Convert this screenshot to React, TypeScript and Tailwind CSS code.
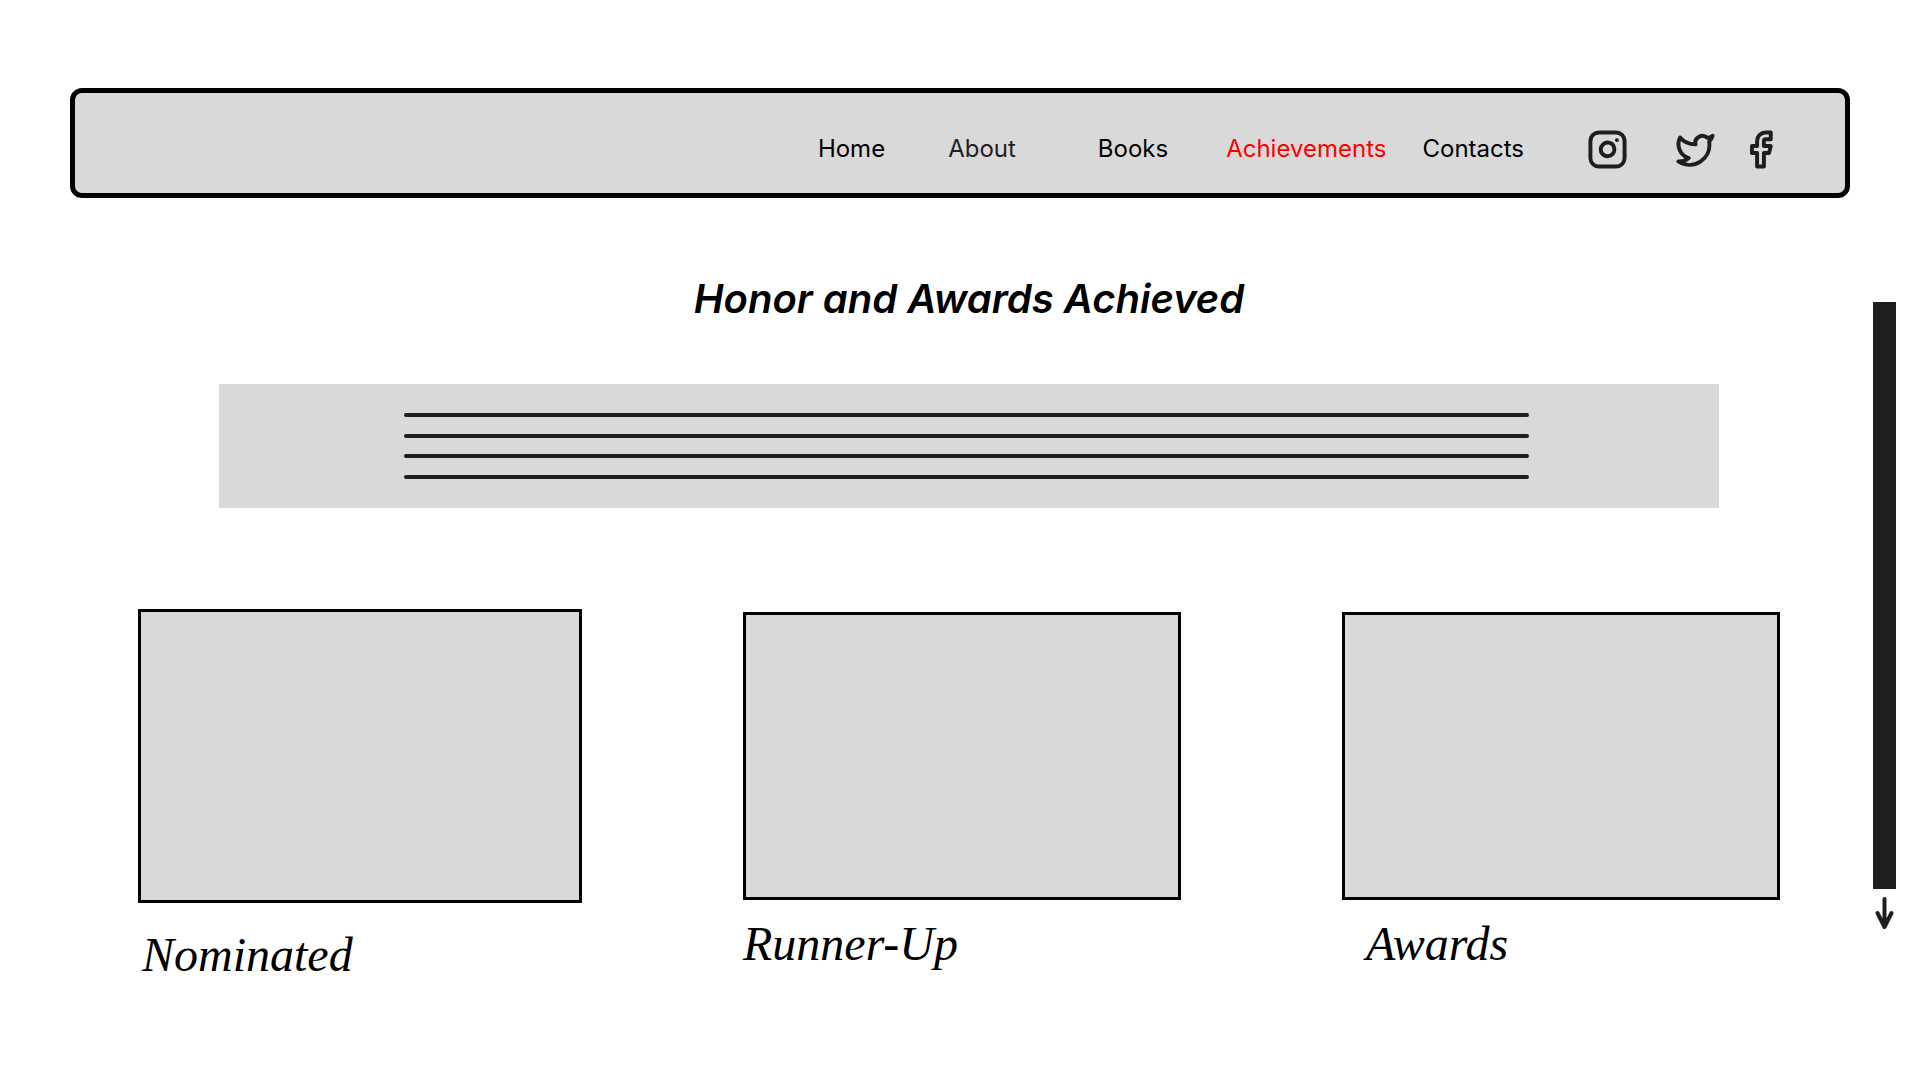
import { Facebook, Instagram, Twitter } from "lucide-react";

const links = [
  { label: "Home", style: "text-black" },
  { label: "About", style: "ml-[63px] text-[#1e1e1e]" },
  { label: "Books", style: "ml-[82px] text-black" },
  { label: "Achievements", style: "ml-[58px] text-[#ff0000]" },
  { label: "Contacts", style: "ml-9 text-black" },
];

const socials = [
  { label: "Instagram", Icon: Instagram, style: "ml-[63px]" },
  { label: "Twitter", Icon: Twitter, style: "ml-[47px]" },
  { label: "Facebook", Icon: Facebook, style: "ml-6" },
];

const cards = [
  { title: "Nominated", style: "flex-[444]", box: "aspect-[444/294]", caption: "mt-5 ml-1" },
  { title: "Runner-Up", style: "flex-[438] pt-[3px]", box: "aspect-[438/288]", caption: "mt-3" },
  { title: "Awards", style: "flex-[438] pt-[3px]", box: "aspect-[438/288]", caption: "mt-3 ml-6" },
];

export default function App() {
  return (
    <div className="min-h-screen bg-white pt-22 font-['Inter',sans-serif] text-black">
      <header className="mx-[70px] flex h-[110px] items-center justify-end rounded-xl border-[5px] border-black bg-[#d9d9d9] pt-3 pr-16">
        <nav aria-label="Main" className="flex items-center text-2xl">
          {links.map(({ label, style }) => (
            <a key={label} href="#" className={style}>
              {label}
            </a>
          ))}
        </nav>
        <div className="flex items-center text-[#1e1e1e]">
          {socials.map(({ label, Icon, style }) => (
            <a key={label} href="#" aria-label={label} className={style}>
              <Icon size={41} strokeWidth={2.3} />
            </a>
          ))}
        </div>
      </header>

      <div className="flex items-start">
        <main className="min-w-0 flex-1">
          <section className="pt-[77px] pr-[154px] pl-[219px]">
            <h1 className="text-center text-[40px] leading-12 font-semibold italic">Honor and Awards Achieved</h1>
            <div className="mt-[61px] flex h-[124px] items-center justify-center bg-[#d9d9d9] pr-1.5">
              <div className="flex h-[66px] w-[1125px] flex-col justify-between">
                {[0, 1, 2, 3].map((line) => (
                  <div key={line} className="h-1 rounded-full bg-[#1e1e1e]" />
                ))}
              </div>
            </div>
          </section>

          <section className="mt-[101px] flex items-start gap-[161px] pr-[93px] pl-[138px]">
            {cards.map(({ title, style, box, caption }) => (
              <article key={title} className={style}>
                <div className={`border-[3px] border-black bg-[#d9d9d9] ${box}`} />
                <h2 className={`font-['Liberation_Serif',serif] text-5xl leading-16 italic ${caption}`}>{title}</h2>
              </article>
            ))}
          </section>
        </main>

        <aside className="mt-[104px] mr-6 flex w-[23px] flex-col items-center">
          <div className="h-[587px] w-full bg-[#1e1e1e]" />
          <button aria-label="Scroll down" className="mt-1 text-[#1e1e1e]">
            <svg width="23" height="40" viewBox="0 0 23 40" fill="none" stroke="currentColor" strokeWidth="4" strokeLinecap="round" strokeLinejoin="round">
              <path d="M11.5 6v28M4.500 20l7 14 7-14" />
            </svg>
          </button>
        </aside>
      </div>
    </div>
  );
}
